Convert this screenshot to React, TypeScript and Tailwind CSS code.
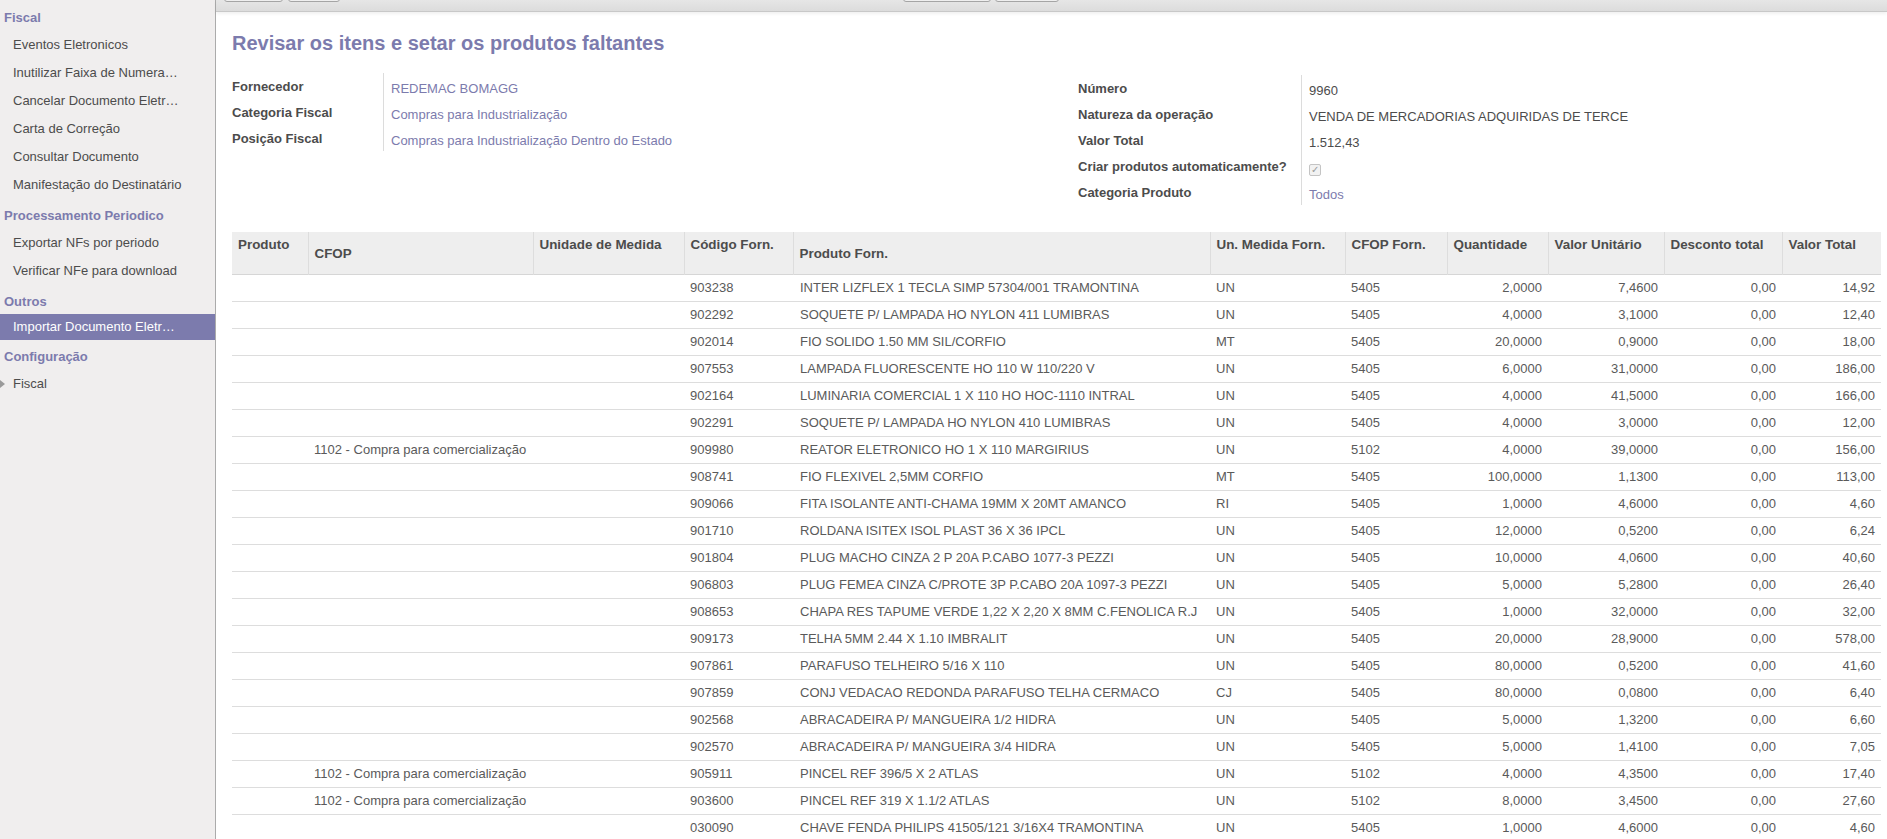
import React from 'react';

const font = { fontFamily: '"Liberation Sans", Arial, sans-serif' };

type Row = [string, string, string, string, string, string, string, string, string];

// cfop, codigo, produto forn., un, cfop forn., qtd, unit, desconto, total
const rows: Row[] = [
  ['', '903238', 'INTER LIZFLEX 1 TECLA SIMP 57304/001 TRAMONTINA', 'UN', '5405', '2,0000', '7,4600', '0,00', '14,92'],
  ['', '902292', 'SOQUETE P/ LAMPADA HO NYLON 411 LUMIBRAS', 'UN', '5405', '4,0000', '3,1000', '0,00', '12,40'],
  ['', '902014', 'FIO SOLIDO 1.50 MM SIL/CORFIO', 'MT', '5405', '20,0000', '0,9000', '0,00', '18,00'],
  ['', '907553', 'LAMPADA FLUORESCENTE HO 110 W 110/220 V', 'UN', '5405', '6,0000', '31,0000', '0,00', '186,00'],
  ['', '902164', 'LUMINARIA COMERCIAL 1 X 110 HO HOC-1110 INTRAL', 'UN', '5405', '4,0000', '41,5000', '0,00', '166,00'],
  ['', '902291', 'SOQUETE P/ LAMPADA HO NYLON 410 LUMIBRAS', 'UN', '5405', '4,0000', '3,0000', '0,00', '12,00'],
  ['1102 - Compra para comercialização', '909980', 'REATOR ELETRONICO HO 1 X 110 MARGIRIUS', 'UN', '5102', '4,0000', '39,0000', '0,00', '156,00'],
  ['', '908741', 'FIO FLEXIVEL 2,5MM CORFIO', 'MT', '5405', '100,0000', '1,1300', '0,00', '113,00'],
  ['', '909066', 'FITA ISOLANTE ANTI-CHAMA 19MM X 20MT AMANCO', 'RI', '5405', '1,0000', '4,6000', '0,00', '4,60'],
  ['', '901710', 'ROLDANA ISITEX ISOL PLAST 36 X 36 IPCL', 'UN', '5405', '12,0000', '0,5200', '0,00', '6,24'],
  ['', '901804', 'PLUG MACHO CINZA 2 P 20A P.CABO 1077-3 PEZZI', 'UN', '5405', '10,0000', '4,0600', '0,00', '40,60'],
  ['', '906803', 'PLUG FEMEA CINZA C/PROTE 3P P.CABO 20A 1097-3 PEZZI', 'UN', '5405', '5,0000', '5,2800', '0,00', '26,40'],
  ['', '908653', 'CHAPA RES TAPUME VERDE 1,22 X 2,20 X 8MM C.FENOLICA R.J', 'UN', '5405', '1,0000', '32,0000', '0,00', '32,00'],
  ['', '909173', 'TELHA 5MM 2.44 X 1.10 IMBRALIT', 'UN', '5405', '20,0000', '28,9000', '0,00', '578,00'],
  ['', '907861', 'PARAFUSO TELHEIRO 5/16 X 110', 'UN', '5405', '80,0000', '0,5200', '0,00', '41,60'],
  ['', '907859', 'CONJ VEDACAO REDONDA PARAFUSO TELHA CERMACO', 'CJ', '5405', '80,0000', '0,0800', '0,00', '6,40'],
  ['', '902568', 'ABRACADEIRA P/ MANGUEIRA 1/2 HIDRA', 'UN', '5405', '5,0000', '1,3200', '0,00', '6,60'],
  ['', '902570', 'ABRACADEIRA P/ MANGUEIRA 3/4 HIDRA', 'UN', '5405', '5,0000', '1,4100', '0,00', '7,05'],
  ['1102 - Compra para comercialização', '905911', 'PINCEL REF 396/5 X 2 ATLAS', 'UN', '5102', '4,0000', '4,3500', '0,00', '17,40'],
  ['1102 - Compra para comercialização', '903600', 'PINCEL REF 319 X 1.1/2 ATLAS', 'UN', '5102', '8,0000', '3,4500', '0,00', '27,60'],
  ['', '030090', 'CHAVE FENDA PHILIPS 41505/121 3/16X4 TRAMONTINA', 'UN', '5405', '1,0000', '4,6000', '0,00', '4,60'],
];

const columns = [
  { label: 'Produto', w: 76 },
  { label: 'CFOP', w: 225, low: true },
  { label: 'Unidade de Medida', w: 151 },
  { label: 'Código Forn.', w: 109 },
  { label: 'Produto Forn.', w: 417, low: true },
  { label: 'Un. Medida Forn.', w: 135 },
  { label: 'CFOP Forn.', w: 102 },
  { label: 'Quantidade', w: 101 },
  { label: 'Valor Unitário', w: 116 },
  { label: 'Desconto total', w: 118 },
  { label: 'Valor Total', w: 99 },
];

const menu = [
  { title: 'Fiscal', items: ['Eventos Eletronicos', 'Inutilizar Faixa de Numera…', 'Cancelar Documento Eletr…', 'Carta de Correção', 'Consultar Documento', 'Manifestação do Destinatário'] },
  { title: 'Processamento Periodico', items: ['Exportar NFs por periodo', 'Verificar NFe para download'] },
  { title: 'Outros', items: ['Importar Documento Eletr…'] },
  { title: 'Configuração', items: ['Fiscal'] },
];

function Sidebar() {
  return (
    <div className="w-[216px] shrink-0 h-full bg-[#f0eeee] border-r border-[#ababab] pt-[1px]">
      {menu.map((sec) => (
        <div key={sec.title}>
          <div className="mt-[4px] h-[26px] flex items-center pl-[4px] text-[13px] font-bold text-[#7c7bad]">{sec.title}</div>
          {sec.items.map((it) => {
            const active = it === 'Importar Documento Eletr…';
            const tree = sec.title === 'Configuração';
            return (
              <div
                key={it}
                className={
                  active
                    ? '-mt-[1px] h-[26px] mb-[1px] flex items-center pl-[13px] text-[13px] bg-[#7c7bad] text-white'
                    : 'h-[28px] flex items-center pl-[13px] text-[13px] text-[#4c4c4c] relative'
                }
              >
                {tree && (
                  <span className="absolute left-0 top-[10px] w-0 h-0 border-y-[4px] border-y-transparent border-l-[5px] border-l-[#9a9a9a]" />
                )}
                {it}
              </div>
            );
          })}
        </div>
      ))}
    </div>
  );
}

function Toolbar() {
  return (
    <div className="h-[12px] shrink-0 bg-gradient-to-b from-[#e6e6e6] to-[#dcdcdc] border-b border-[#c8c8c8] shadow-[0_2px_3px_rgba(0,0,0,0.06)] flex pl-[8px] overflow-hidden">
      <div className="h-[26px] -mt-[24px] w-[59px] rounded-[3px] border border-[#a5a5a5] bg-[#efefef]" />
      <div className="h-[26px] -mt-[24px] w-[52px] ml-[5px] rounded-[3px] border border-[#a5a5a5] bg-[#efefef]" />
      <div className="h-[26px] -mt-[24px] w-[88px] ml-[563px] rounded-[3px] border border-[#a5a5a5] bg-[#efefef]" />
      <div className="h-[26px] -mt-[24px] w-[64px] ml-[4px] rounded-[3px] border border-[#a5a5a5] bg-[#efefef]" />
    </div>
  );
}

function Field({ label, children }: { label: string; children: React.ReactNode }) {
  return (
    <>
      <div className="h-[26px] pt-[4px] text-[13px] font-bold text-[#4c4c4c] whitespace-nowrap">{label}</div>
      <div className="h-[26px] pt-[6px] pl-[7px] border-l border-[#dcdcdc] text-[13px] whitespace-nowrap">{children}</div>
    </>
  );
}

export default function App() {
  return (
    <div className="flex h-screen w-full overflow-hidden bg-white" style={font}>
      <Sidebar />
      <div className="flex-1 flex flex-col min-w-0">
        <Toolbar />
        <div className="pl-[16px] pr-[6px] overflow-hidden">
          <h1 className="mt-[19px] h-[24px] leading-[24px] text-[20px] font-bold text-[#7c7bad]">
            Revisar os itens e setar os produtos faltantes
          </h1>

          <div className="mt-[20px] flex">
            <div className="w-[846px] -mt-[2px] grid grid-cols-[151px_1fr] content-start">
              <Field label="Fornecedor"><span className="text-[#7c7bad]">REDEMAC BOMAGG</span></Field>
              <Field label="Categoria Fiscal"><span className="text-[#7c7bad]">Compras para Industrialização</span></Field>
              <Field label="Posição Fiscal"><span className="text-[#7c7bad]">Compras para Industrialização Dentro do Estado</span></Field>
            </div>
            <div className="flex-1 grid grid-cols-[223px_1fr] content-start">
              <Field label="Número"><span className="text-[#4c4c4c]">9960</span></Field>
              <Field label="Natureza da operação"><span className="text-[#4c4c4c]">VENDA DE MERCADORIAS ADQUIRIDAS DE TERCE</span></Field>
              <Field label="Valor Total"><span className="text-[#4c4c4c]">1.512,43</span></Field>
              <Field label="Criar produtos automaticamente?">
                <span className="inline-flex items-center justify-center w-[12px] h-[12px] border border-[#c4c4c4] rounded-[2px] bg-[#f2f2f2] text-[10px] leading-none text-[#9a9a9a]">✓</span>
              </Field>
              <Field label="Categoria Produto"><span className="text-[#7c7bad]">Todos</span></Field>
            </div>
          </div>

          <table className="mt-[27px] table-fixed border-collapse w-[1649px]">
            <colgroup>
              {columns.map((c) => (
                <col key={c.label} style={{ width: c.w }} />
              ))}
            </colgroup>
            <thead>
              <tr className="h-[42px] bg-[#eeeeee] border-b border-[#d6d6d6]">
                {columns.map((c, i) => (
                  <th
                    key={c.label}
                    className={`align-top text-left px-[6px] text-[13.4px] font-bold text-[#4c4c4c] whitespace-nowrap ${
                      c.low ? 'pt-[12px]' : 'pt-[3px]'
                    } ${i > 0 ? 'border-l border-[#dddddd]' : ''}`}
                  >
                    {c.label}
                  </th>
                ))}
              </tr>
            </thead>
            <tbody className="text-[13px] text-[#5a5a5a]">
              {rows.map((r, i) => (
                <tr key={i} className="h-[27px] border-b border-[#dddddd]">
                  <td className="px-[6px]"></td>
                  <td className="px-[6px] whitespace-nowrap">{r[0]}</td>
                  <td className="px-[6px]"></td>
                  <td className="px-[6px]">{r[1]}</td>
                  <td className="px-[7px] whitespace-nowrap overflow-hidden">{r[2]}</td>
                  <td className="px-[6px]">{r[3]}</td>
                  <td className="px-[6px]">{r[4]}</td>
                  <td className="px-[6px] text-right">{r[5]}</td>
                  <td className="px-[6px] text-right">{r[6]}</td>
                  <td className="px-[6px] text-right">{r[7]}</td>
                  <td className="px-[6px] text-right">{r[8]}</td>
                </tr>
              ))}
            </tbody>
          </table>
        </div>
      </div>
    </div>
  );
}
